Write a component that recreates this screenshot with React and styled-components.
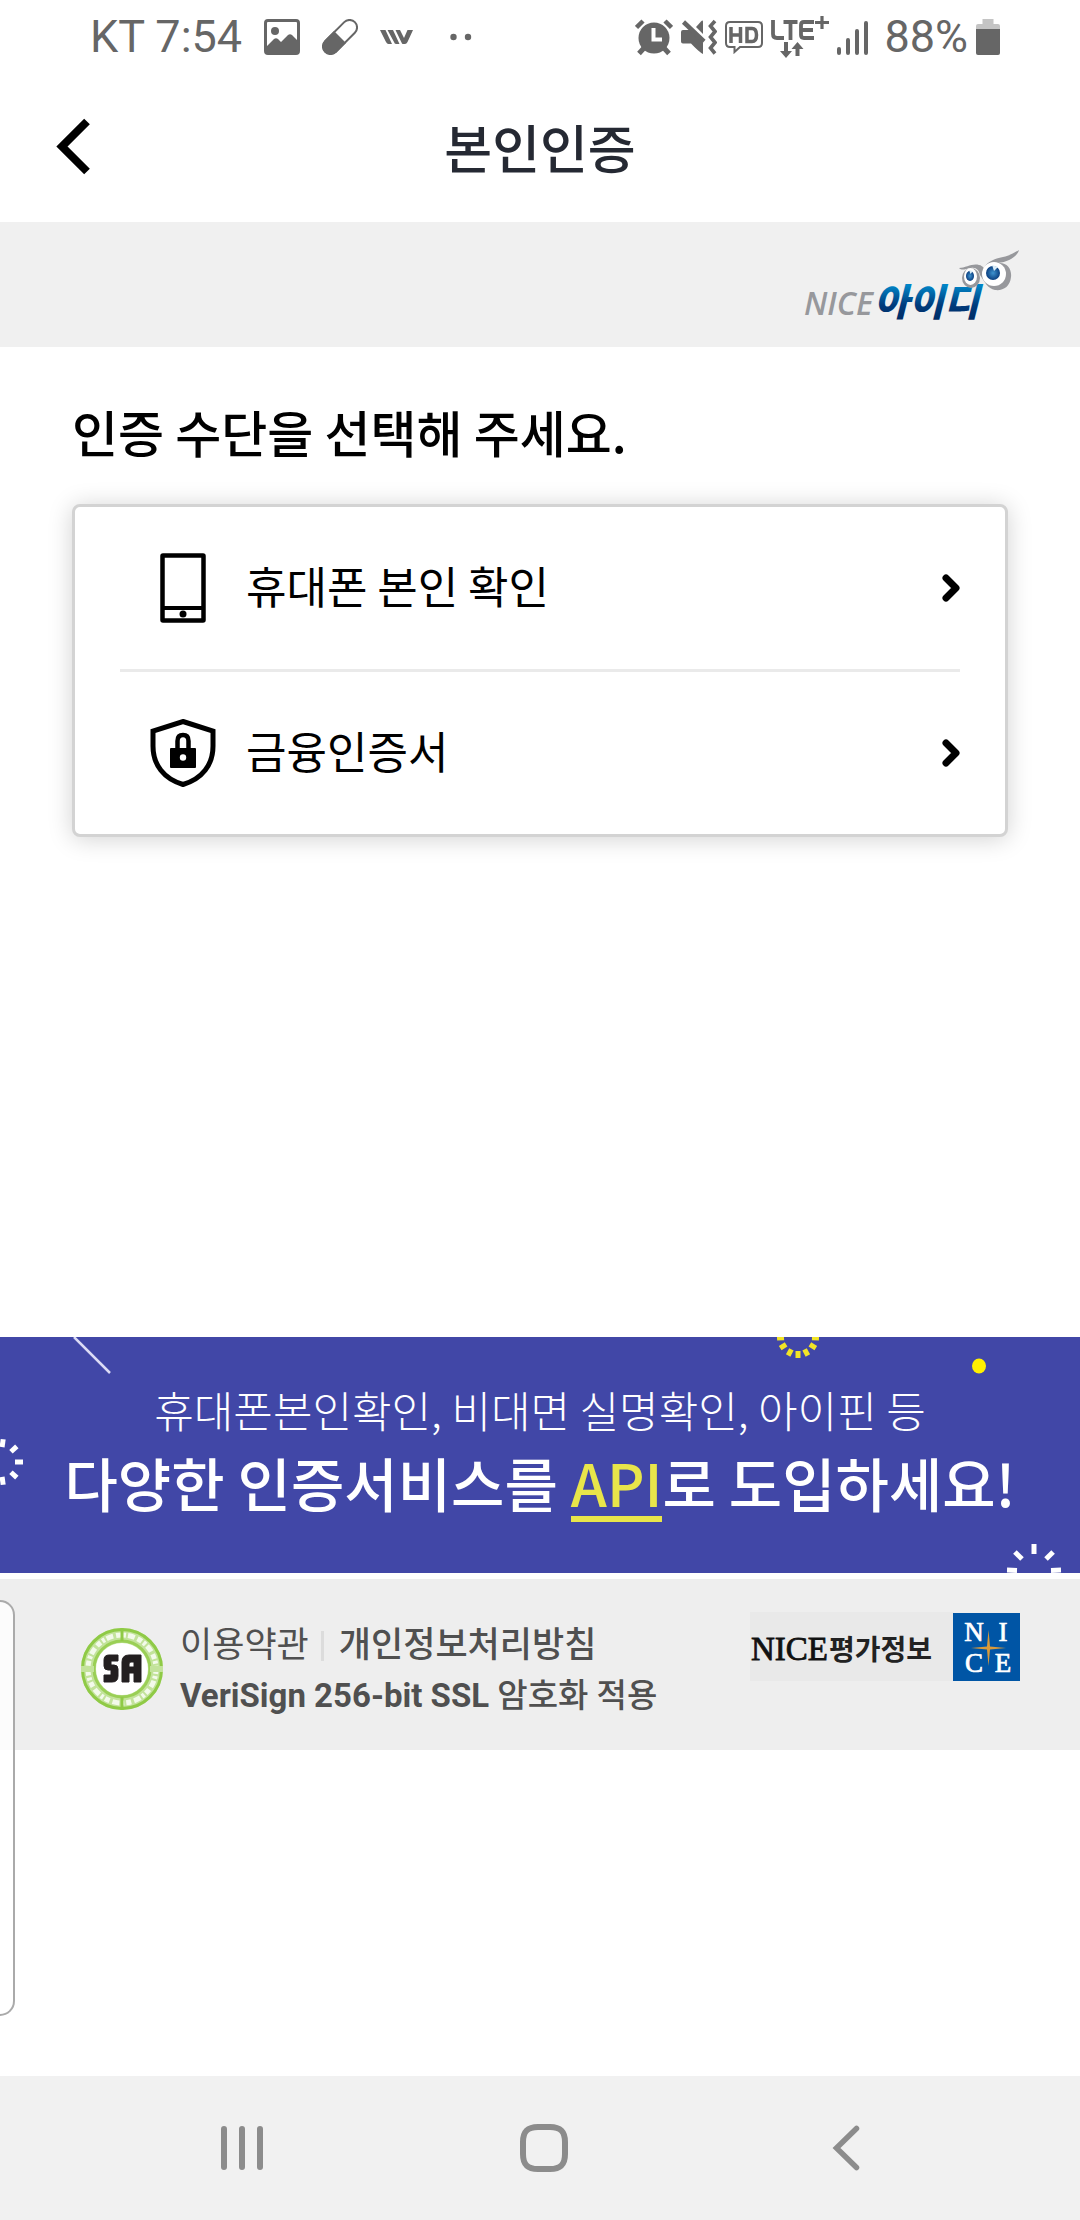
import React from "react";
import styled, { createGlobalStyle } from "styled-components";

const KR = `"Noto Sans CJK KR", "Noto Sans", sans-serif`;
const ROBOTO = `Roboto, "Noto Sans CJK KR", sans-serif`;

const GlobalStyle = createGlobalStyle`
  *, *::before, *::after { box-sizing: border-box; }
  body { margin: 0; background: #fff; font-family: ${KR}; color: #000; }
  button { border: 0; background: none; padding: 0; margin: 0; font: inherit; color: inherit; cursor: pointer; }
  h1, h2, p, ul { margin: 0; padding: 0; }
  svg { display: block; flex: none; }
`;

const Screen = styled.div`
  position: relative;
  display: flex;
  flex-direction: column;
  min-height: 100vh;
  background: #fff;
`;

const StatusBar = styled.div`
  display: flex;
  justify-content: space-between;
  align-items: center;
  height: 74px;
  padding: 0 80px 0 90px;
  color: #666;
  font-family: ${ROBOTO};
  font-size: 45px;
  line-height: 52px;
`;

const StatusGroup = styled.div`
  display: flex;
  align-items: center;
  gap: ${(p) => p.$gap}px;
`;

const Header = styled.header`
  display: grid;
  grid-template-columns: 148px 1fr 148px;
  align-items: center;
  height: 148px;
  padding-bottom: 3px;
`;

const BackButton = styled.button`
  display: flex;
  align-items: center;
  height: 100%;
  padding-left: 56px;
`;

const Title = styled.h1`
  text-align: center;
  font-size: 52px;
  line-height: 76px;
  font-weight: 500;
  color: #252933;
`;

const BrandBar = styled.div`
  display: flex;
  justify-content: flex-end;
  padding: 26px 60px 15px;
  background: #f0f0f0;
`;

const Main = styled.main`
  padding: 48px 72px 500px;
`;

const Heading = styled.h2`
  font-size: 50px;
  line-height: 72px;
  font-weight: 500;
`;

const Card = styled.ul`
  margin-top: 37px;
  padding: 0 45px;
  list-style: none;
  border: 3px solid #d3d3d3;
  border-radius: 8px;
  background: #fff;
  box-shadow: 0 2px 24px rgba(0, 0, 0, 0.18);
`;

const CardItem = styled.li`
  & + & {
    border-top: 3px solid #eaeaea;
  }
`;

const MethodButton = styled.button`
  display: grid;
  grid-template-columns: 126px 1fr auto;
  align-items: center;
  width: 100%;
  height: 162px;
  text-align: left;
`;

const MethodIcon = styled.span`
  display: flex;
  justify-content: center;
`;

const MethodLabel = styled.span`
  padding-bottom: 6px;
  font-size: 44px;
  line-height: 64px;
`;

const Banner = styled.a`
  position: relative;
  display: flex;
  flex-direction: column;
  align-items: center;
  height: 236px;
  padding-top: 40px;
  overflow: hidden;
  background: #4147a7;
  color: #fff;
  text-decoration: none;
  white-space: nowrap;
`;

const BannerLead = styled.span`
  font-size: 43px;
  line-height: 64px;
  font-weight: 300;
`;

const BannerMain = styled.span`
  font-size: 58px;
  line-height: 82px;
  font-weight: 500;
`;

const Accent = styled.span`
  display: inline-block;
  border-bottom: 6px solid #e8e54a;
  line-height: 68px;
  color: #e8e54a;
`;

const Decoration = styled.svg`
  position: absolute;
  top: ${(p) => p.$top};
  bottom: ${(p) => p.$bottom};
  left: ${(p) => p.$left};
  right: ${(p) => p.$right};
`;

const Footer = styled.footer`
  display: flex;
  justify-content: space-between;
  align-items: flex-start;
  margin-top: 6px;
  padding: 33px 60px 27px 80px;
  background: #eee;
  color: #505050;
`;

const FooterInfo = styled.div`
  display: flex;
  align-items: center;
  gap: 16px;
  padding-top: 3px;
`;

const FooterLinks = styled.nav`
  display: flex;
  align-items: center;
  font-size: 35px;
  line-height: 54px;
`;

const FooterLink = styled.a`
  color: inherit;
  text-decoration: none;
  font-weight: ${(p) => (p.$strong ? 500 : 400)};
`;

const Divider = styled.span`
  width: 3px;
  height: 30px;
  margin: 8px 15px 0 12px;
  background: #dcdcdc;
`;

const SecurityNote = styled.p`
  font-family: ${ROBOTO};
  font-size: 33px;
  line-height: 54px;
  font-weight: 700;
`;

const NoteKorean = styled.span`
  font-weight: 500;
`;

const EdgePanel = styled.div`
  position: absolute;
  top: 1600px;
  left: 0;
  width: 15px;
  height: 416px;
  border: 2px solid #aaa;
  border-left: 0;
  border-radius: 0 16px 16px 0;
  background: rgba(255, 255, 255, 0.8);
`;

const NavBar = styled.nav`
  display: grid;
  grid-template-columns: repeat(3, 302px);
  justify-content: center;
  height: 144px;
  margin-top: auto;
  padding-left: 8px;
  background: #f1f1f1;
`;

const NavButton = styled.button`
  display: flex;
  align-items: center;
  justify-content: center;
`;

const PictureIcon = () => (
  <svg width="36" height="36" viewBox="0 0 36 36" fill="none">
    <rect x="1.5" y="1.5" width="33" height="33" rx="2.5" stroke="#666" strokeWidth="3" />
    <circle cx="11" cy="12" r="4" fill="#666" />
    <path d="M3 27 L10 20 Q12 18.500 14 20 L17 23 L24 16 Q26 14.500 28 16 L34 22 V34 H2 Z" fill="#666" />
  </svg>
);

const PillIcon = () => (
  <svg width="36" height="36" viewBox="0 0 36 36" fill="none">
    <g transform="rotate(45 18 18)">
      <rect x="10.500" y="-3" width="15" height="42" rx="7.500" stroke="#666" strokeWidth="2" />
      <path d="M9.500 18 H26.500 V31 A8.500 8.500 0 0 1 9.500 31 Z" fill="#666" />
    </g>
  </svg>
);

const StripesIcon = () => (
  <svg width="33" height="14" viewBox="0 0 33 14" fill="#666">
    <path d="M0 0 H5.500 L12 14 H8.500 Q7 14 6 12 Z M7.500 0 H13 L19.500 14 H16 Q14.500 14 14 12 Z M15.500 0 H20 L24 8 L27.500 0 H33 L27.500 12 Q26.500 14 25 14 H23 Q22 14 21.500 12.500 Z" />
  </svg>
);

const DotsIcon = () => (
  <svg width="37" height="8" viewBox="0 0 37 8" fill="#666">
    <circle cx="18.500" cy="4" r="3.200" />
    <circle cx="33" cy="4" r="3.200" />
  </svg>
);

const AlarmIcon = () => (
  <svg width="38" height="37" viewBox="0 0 38 37" fill="none">
    <circle cx="19" cy="19" r="15.500" fill="#666" />
    <path d="M1.500 8.500 L8 2 M36.500 8.500 L30 2" stroke="#666" strokeWidth="4.500" />
    <path d="M9 29 L4 34.500 M29 29 L34 34.500" stroke="#666" strokeWidth="5" />
    <path d="M18.500 9 V20.500 H27" stroke="#fff" strokeWidth="4" />
  </svg>
);

const MuteVibrateIcon = () => (
  <svg width="36" height="37" viewBox="0 0 36 37" fill="#666">
    <path d="M2 11 H8 L11 11 L22 24 V35 Q18 33 10 24.500 H2 Q0 24.500 0 22.500 V13 Q0 11 2 11 Z" />
    <path d="M15 8 L20 2.500 Q22 0.500 22 3 V15 Z" />
    <path d="M2.500 3 L23 22.500" stroke="#666" strokeWidth="4.500" fill="none" />
    <path d="M34 2 L29.500 7 L34 12.500 L29.500 18 L34 23.500 L29.500 29 L34 34.500" stroke="#666" strokeWidth="3.600" fill="none" />
  </svg>
);

const HdIcon = () => (
  <svg width="38" height="33" viewBox="0 0 38 33" fill="none">
    <path d="M5 1 H33 Q37 1 37 5 V22 Q37 26 33 26 H15 L9.500 31 V26 H5 Q1 26 1 22 V5 Q1 1 5 1 Z" stroke="#666" strokeWidth="2" />
    <path d="M6 6 V22 M15.500 6 V22 M6 14 H15.500 M22 7.500 V20.500 H27 Q31.500 20.500 31.500 14 Q31.500 7.500 27 7.500 Z" stroke="#666" strokeWidth="3.500" />
  </svg>
);

const LteIcon = () => (
  <svg width="58" height="44" viewBox="0 0 58 44" fill="none" stroke="#666">
    <path d="M2 5 V19 Q2 23 6 23 H13 M12.500 7 H26.500 M19.500 7 V25 M43 7 H33 Q30 7 30 10 V20 Q30 23 33 23 H43 M30 15 H42" strokeWidth="3.800" />
    <path d="M44 7.500 H58 M51 1 V14" strokeWidth="3.200" />
    <path d="M15 27 V37 M26.500 41 V32" strokeWidth="4" />
    <path d="M9 36 H21 L15 43 Z M20.500 34 H32.500 L26.500 27 Z" fill="#666" stroke="none" />
  </svg>
);

const SignalIcon = () => (
  <svg width="31" height="35" viewBox="0 0 31 35" fill="none" stroke="#666" strokeWidth="4" strokeLinecap="round">
    <path d="M2 29 V33 M11 20 V33 M20 11 V33 M29 3 V33" />
  </svg>
);

const BatteryIcon = () => (
  <svg width="24" height="36" viewBox="0 0 24 36">
    <path d="M6.500 0 H17.500 V5 H22 Q24 5 24 7 V12 H0 V7 Q0 5 2 5 H6.500 Z" fill="#c4c4c4" />
    <path d="M0 10 H24 V34 Q24 36 22 36 H2 Q0 36 0 34 Z" fill="#666" />
  </svg>
);

const NiceIdLogo = () => (
  <svg width="216" height="84" viewBox="0 0 216 84" role="img" aria-label="NICE아이디">
    <defs>
      <linearGradient id="brandBlue" x1="0" y1="0" x2="0" y2="1">
        <stop offset="0.250" stopColor="#0084c6" />
        <stop offset="0.600" stopColor="#003b7c" />
        <stop offset="1" stopColor="#002458" />
      </linearGradient>
      <radialGradient id="iris">
        <stop offset="0" stopColor="#3f93cf" />
        <stop offset="1" stopColor="#0b3f80" />
      </radialGradient>
    </defs>
    <text x="0" y="67" fontFamily="Open Sans, sans-serif" fontSize="32" fontStyle="italic" fontWeight="600" fill="#97989c">NICE</text>
    <text x="70" y="68" fontFamily="Noto Sans CJK KR, sans-serif" fontSize="38" fontStyle="italic" fontWeight="900" fill="url(#brandBlue)">아이디</text>
    <path fill="#97989c" d="M155 20 C162 20 168 15 175 17 C177 17 179 19 180 20 C184 13 190 11 199 9 C205 8 210 5 215 2 C213 9 204 14 194 15 C203 14 208 21 207 29 C206 39 199 43 191 42 C184 41 180 33 176 27 C175 22 172 19 167 20 C161 21 158 23 155 20 Z" />
    <ellipse cx="190" cy="26" rx="12" ry="12" fill="#fff" />
    <ellipse cx="167" cy="30" rx="9" ry="10" fill="#97989c" />
    <ellipse cx="166.500" cy="28.500" rx="6.500" ry="8.500" fill="#fff" />
    <circle cx="189" cy="25" r="7" fill="url(#iris)" />
    <ellipse cx="166" cy="28" rx="4" ry="5" fill="url(#iris)" />
    <path d="M188 17 L190 23 L194 19 Z" fill="#d9ecf7" />
    <path d="M165 22 L166.500 26 L169 23 Z" fill="#d9ecf7" />
  </svg>
);

const PhoneIcon = () => (
  <svg width="46" height="70" viewBox="0 0 46 70" fill="none" stroke="#000">
    <rect x="2.500" y="2.500" width="41" height="65" strokeWidth="4.500" rx="0.500" />
    <path d="M2 55 H44" strokeWidth="4" />
    <circle cx="23" cy="61" r="3.500" fill="#000" stroke="none" />
  </svg>
);

const ShieldIcon = () => (
  <svg width="66" height="68" viewBox="0 0 66 68" fill="none" stroke="#000">
    <path d="M33 2.500 L63 12 V27 C63 46 52 60 33 65.500 C14 60 3 46 3 27 V12 Z" strokeWidth="5" />
    <path d="M27.500 31 V22 Q27.500 16 33 16 Q38.500 16 38.500 22 V31" strokeWidth="4.500" />
    <rect x="20" y="29" width="26" height="20" rx="1" fill="#000" stroke="none" />
    <circle cx="33" cy="38.500" r="3.200" fill="#fff" stroke="none" />
  </svg>
);

const Chevron = () => (
  <svg width="18" height="28" viewBox="0 0 18 28" fill="none">
    <path d="M4 4 L14 14 L4 24" stroke="#000" strokeWidth="7" strokeLinecap="round" strokeLinejoin="round" />
  </svg>
);

const Rays = ({ angles, cx, cy, from, to, color, width }) => (
  <g stroke={color} strokeWidth={width}>
    {angles.map((a) => {
      const r = (a * Math.PI) / 180;
      return (
        <line
          key={a}
          x1={cx + from * Math.cos(r)}
          y1={cy + from * Math.sin(r)}
          x2={cx + to * Math.cos(r)}
          y2={cy + to * Math.sin(r)}
        />
      );
    })}
  </g>
);

const SealIcon = () => (
  <svg width="84" height="84" viewBox="0 0 84 84" role="img" aria-label="SA">
    <circle cx="42" cy="42" r="33.500" fill="#fff" stroke="#c3e39b" strokeWidth="15" />
    <circle cx="42" cy="42" r="39.500" fill="none" stroke="#8fca46" strokeWidth="3" />
    <circle cx="42" cy="42" r="28" fill="none" stroke="#9acf55" strokeWidth="3" />
    <circle cx="42" cy="42" r="34" fill="none" stroke="#f3faea" strokeWidth="5" strokeDasharray="5 2 3 2 7 3" />
    <path d="M42 1 V14 M42 70 V83" stroke="#8fca46" strokeWidth="3" />
    <path d="M1 42 H14 M70 42 H83" stroke="#c3e39b" strokeWidth="6" />
    <path d="M38 28 H29 Q24 28 24 33 V39 Q24 43 28 43 H31 V48 H24 V55 H32 Q38 55 38 49 V42 Q38 38 34 38 H31 V34 H38 Z" fill="#231f20" stroke="#231f20" />
    <path fillRule="evenodd" d="M42 55 V35 Q42 28 49 28 H61 V55 H54 V46 H49 V55 Z M49 40 H54 V35 H51 Q49 35 49 37 Z" fill="#231f20" stroke="#231f20" />
  </svg>
);

const NiceInfoLogo = () => (
  <svg width="270" height="69" viewBox="0 0 270 69" role="img" aria-label="NICE평가정보">
    <rect width="204" height="69" fill="#e9e9e9" />
    <text x="1" y="48" fontFamily="Liberation Serif, serif" fontSize="33" fontWeight="400" fill="#111" stroke="#111" strokeWidth="0.800">NICE</text>
    <text x="79" y="48" fontFamily="Noto Sans CJK KR, sans-serif" fontSize="28" fontWeight="700" fill="#222">평가정보</text>
    <rect x="203" y="1" width="67" height="68" fill="#0055a5" />
    <g fontFamily="Liberation Serif, serif" fontSize="27" fontWeight="400" fill="#fff" stroke="#fff" strokeWidth="0.700" textAnchor="middle">
      <text x="224" y="29">N</text>
      <text x="253" y="29">I</text>
      <text x="224" y="60">C</text>
      <text x="253" y="60">E</text>
    </g>
    <path d="M238.500 18 L240 34.500 L256 36 L240 37.500 L238.500 54 L237 37.500 L221 36 L237 34.500 Z" fill="#d99a3a" />
  </svg>
);

const methods = [
  { label: "휴대폰 본인 확인", Icon: PhoneIcon },
  { label: "금융인증서", Icon: ShieldIcon },
];

export default function App() {
  return (
    <Screen>
      <GlobalStyle />
      <StatusBar>
        <StatusGroup $gap={22}>
          <span>KT 7:54</span>
          <PictureIcon />
          <PillIcon />
          <StripesIcon />
          <DotsIcon />
        </StatusGroup>
        <StatusGroup $gap={8}>
          <AlarmIcon />
          <MuteVibrateIcon />
          <HdIcon />
          <LteIcon />
          <SignalIcon />
          <span />
          <span>88%</span>
          <BatteryIcon />
        </StatusGroup>
      </StatusBar>

      <Header>
        <BackButton type="button" aria-label="뒤로">
          <svg width="35" height="57" viewBox="0 0 35 57" fill="none">
            <path d="M31 3.500 L6 28.500 L31 53.500" stroke="#000" strokeWidth="8" />
          </svg>
        </BackButton>
        <Title>본인인증</Title>
      </Header>

      <BrandBar>
        <NiceIdLogo />
      </BrandBar>

      <Main>
        <Heading>인증 수단을 선택해 주세요.</Heading>
        <Card>
          {methods.map(({ label, Icon }) => (
            <CardItem key={label}>
              <MethodButton type="button">
                <MethodIcon>
                  <Icon />
                </MethodIcon>
                <MethodLabel>{label}</MethodLabel>
                <Chevron />
              </MethodButton>
            </CardItem>
          ))}
        </Card>
      </Main>

      <Banner href="#api">
        <Decoration $top="0" $left="70px" width="50" height="40" viewBox="0 0 50 40">
          <path d="M4 0 L40 36" stroke="#dcdcf6" strokeWidth="2.500" />
        </Decoration>
        <Decoration $top="93px" $left="0" width="30" height="64" viewBox="0 0 30 64">
          <Rays angles={[-82, -43, 0, 43, 82]} cx={0} cy={32} from={15} to={23} color="#fff" width={5} />
        </Decoration>
        <Decoration $top="0" $right="255px" width="54" height="24" viewBox="0 0 54 24">
          <Rays angles={[3, 32, 62, 90, 118, 148, 177]} cx={27} cy={0} from={14} to={21} color="#f2e526" width={5} />
        </Decoration>
        <Decoration $top="21px" $right="94px" width="14" height="16" viewBox="0 0 14 16">
          <ellipse cx="7" cy="8" rx="7" ry="7.500" fill="#fff000" />
        </Decoration>
        <Decoration $bottom="0" $right="16px" width="60" height="32" viewBox="0 0 60 32">
          <Rays angles={[-178, -135, -90, -45, -2]} cx={30} cy={30} from={17} to={27} color="#fff" width={5} />
        </Decoration>
        <BannerLead>휴대폰본인확인, 비대면 실명확인, 아이핀 등</BannerLead>
        <BannerMain>
          다양한 인증서비스를 <Accent>API</Accent>로 도입하세요!
        </BannerMain>
      </Banner>

      <Footer>
        <FooterInfo>
          <SealIcon />
          <div>
            <FooterLinks>
              <FooterLink href="#terms">이용약관</FooterLink>
              <Divider />
              <FooterLink href="#privacy" $strong>
                개인정보처리방침
              </FooterLink>
            </FooterLinks>
            <SecurityNote>
              VeriSign 256-bit SSL <NoteKorean>암호화 적용</NoteKorean>
            </SecurityNote>
          </div>
        </FooterInfo>
        <NiceInfoLogo />
      </Footer>

      <EdgePanel />

      <NavBar>
        <NavButton type="button" aria-label="최근 앱">
          <svg width="42" height="46" viewBox="0 0 42 46" fill="none" stroke="#8c8c8c" strokeWidth="6" strokeLinecap="round">
            <path d="M3 4 V42 M21 4 V42 M39 4 V42" />
          </svg>
        </NavButton>
        <NavButton type="button" aria-label="홈">
          <svg width="48" height="48" viewBox="0 0 48 48" fill="none" stroke="#8c8c8c" strokeWidth="6">
            <path d="M24 3 H30 C41 3 45 8 45 18 V30 C45 40 41 45 30 45 H18 C7 45 3 40 3 30 V18 C3 8 7 3 18 3 Z" />
          </svg>
        </NavButton>
        <NavButton type="button" aria-label="이전">
          <svg width="28" height="46" viewBox="0 0 28 46" fill="none" stroke="#8c8c8c" strokeWidth="5.500" strokeLinecap="round">
            <path d="M24.500 3.500 L4.500 23 L24.500 42.500" />
          </svg>
        </NavButton>
      </NavBar>
    </Screen>
  );
}
